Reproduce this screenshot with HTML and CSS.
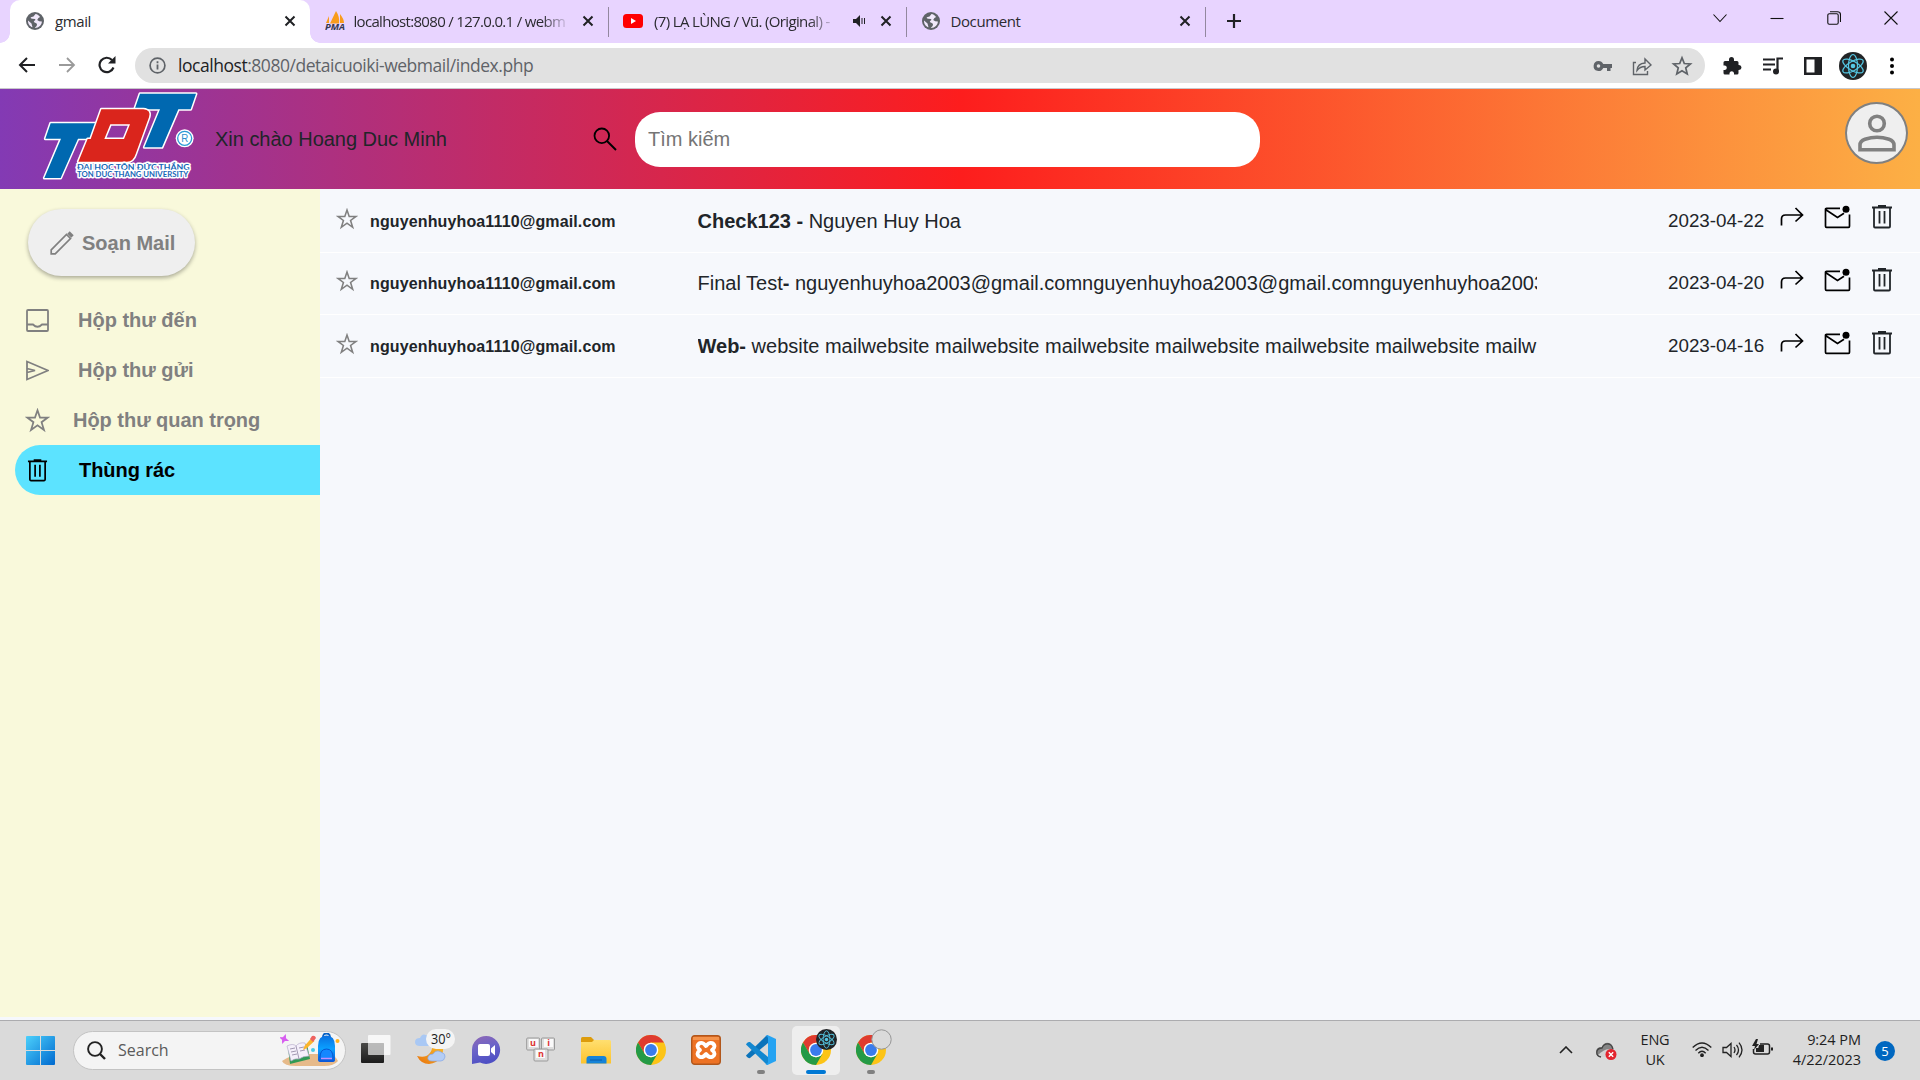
FILE: index.html
```html
<!DOCTYPE html>
<html lang="vi">
<head>
<meta charset="utf-8">
<title>gmail</title>
<link rel="stylesheet" href="styles.css">
</head>
<body>
<svg class="defs" width="0" height="0" aria-hidden="true">
  <defs>
    <linearGradient id="gWin" x1="0" y1="0" x2="1" y2="1"><stop offset="0" stop-color="#4cd0fb"/><stop offset="1" stop-color="#0069cf"/></linearGradient>
    <linearGradient id="gFolder" x1="0" y1="0" x2="0" y2="1"><stop offset="0" stop-color="#ffdf70"/><stop offset="1" stop-color="#fcc32c"/></linearGradient>
    <linearGradient id="gChat" x1="0" y1="0" x2=".3" y2="1"><stop offset="0" stop-color="#9068b4"/><stop offset=".5" stop-color="#6c64c8"/><stop offset="1" stop-color="#4f50c4"/></linearGradient>
    <linearGradient id="gBag" x1="0" y1="0" x2="0" y2="1"><stop offset="0" stop-color="#0a6fe0"/><stop offset=".5" stop-color="#0aa0ff"/><stop offset="1" stop-color="#0a55d8"/></linearGradient>
    <linearGradient id="gDark" x1="0" y1="0" x2="0" y2="1"><stop offset="0" stop-color="#4a4a48"/><stop offset="1" stop-color="#1c1c1c"/></linearGradient>
    <linearGradient id="gMoon" x1="1" y1="0" x2="0" y2="1"><stop offset="0" stop-color="#fbc02d"/><stop offset="1" stop-color="#e8720c"/></linearGradient>
  </defs>
  <symbol id="globe" viewBox="0 0 18 18"><circle cx="9" cy="9" r="9" fill="#5f6368"/><path d="M2 8.500l3.500 3 1 3.800c-2.700-.800-4.700-3.500-4.500-6.800zM9.500 2l-2 2.500-2.600.8c-.6.500.2 1.600 1.500 1.500l2.500.2c1 .4.400 1.600-.6 1.800l-.5 1.300 2.800 1.400c.8.800.3 2.400-1 3.600l-.8 1c3.800.200 7-2.900 7.100-6.500l-2.700-.3-2-1.400 1.200-2 1.700-.8C12.900 3.300 11.400 2.200 9.500 2z" fill="#f1e9fb"/></symbol>
  <symbol id="x" viewBox="0 0 12 12"><path d="M1.500 1.500l9 9M10.500 1.500l-9 9" stroke="#202124" stroke-width="2" fill="none"/></symbol>
  <symbol id="star" viewBox="0 0 24 24"><path d="M12 2.200l2.400 7h7.500l-6 4.400 2.300 7.500-6.200-4.500-6.200 4.500 2.300-7.500-6-4.400h7.500z" fill="none" stroke="currentColor" stroke-width="1.700"/></symbol>
  <symbol id="trash" viewBox="0 0 22 24"><path d="M1 2.500h20M7 1h8" stroke="currentColor" stroke-width="1.800" fill="none"/><path d="M3 3v18.500q0 1 1 1h14q1 0 1-1V3M8.500 6v12.500M13.500 6v12.500" stroke="currentColor" stroke-width="1.800" fill="none"/></symbol>
  <symbol id="forward" viewBox="0 0 24 20"><path d="M1.500 18.500V12q0-4 4-4H22M15.500 1l7 7-7 6.500" stroke="#000" stroke-width="1.700" fill="none"/></symbol>
  <symbol id="unread" viewBox="0 0 27 24"><path d="M16 3.300H2.500q-1 0-1 1v17q0 1 1 1h22q1 0 1-1V9.500M1.500 4.500l12 8 6.500-4.300" stroke="#000" stroke-width="1.700" fill="none"/><circle cx="22" cy="4.200" r="3.500"/></symbol>
  <symbol id="react" viewBox="0 0 28 28"><circle cx="14" cy="14" r="14" fill="#222426"/><g fill="none" stroke="#55c8e4" stroke-width="1.200"><ellipse cx="14" cy="14" rx="11.500" ry="4.500" transform="rotate(90 14 14)"/><ellipse cx="14" cy="14" rx="11.500" ry="4.500" transform="rotate(30 14 14)"/><ellipse cx="14" cy="14" rx="11.500" ry="4.500" transform="rotate(150 14 14)"/></g><circle cx="14" cy="14" r="2.300" fill="#55c8e4"/></symbol>
  <symbol id="chrome" viewBox="0 0 30 30"><circle cx="15" cy="15" r="15" fill="#fcc417"/><path d="M2 7.500A15 15 0 0 1 28 7.500H15L8.500 11.200V18.700z" fill="#df3b2f"/><path d="M2 7.500L8.600 18.700 15 22.500 21.500 18.700 15 30A15 15 0 0 1 2 7.500z" fill="#249a46"/><circle cx="15" cy="15" r="7.300" fill="#fff"/><circle cx="15" cy="15" r="5.900" fill="#3a7cec"/></symbol>
</svg>

<header class="browser">
  <div class="tabstrip">
    <div class="tab tab-active"><svg class="fav" width="18" height="18"><use href="#globe"/></svg><span class="tab-title">gmail</span><svg class="close" width="12" height="12"><use href="#x"/></svg></div>
    <div class="tab"><svg class="fav pma" width="20" height="20" viewBox="0 0 20 20"><path d="M1 12L4 5v7zM5 12.500L11 0q4 6 3 12.500zM15 12V3q4 5 4 9z" fill="#f89c1c"/><text x="0" y="19" font-size="8.500" font-weight="700" textLength="20" lengthAdjust="spacingAndGlyphs" fill="#333850" font-style="italic">PMA</text></svg><span class="tab-title fade long">localhost:8080 / 127.0.0.1 / webm</span><svg class="close" width="12" height="12"><use href="#x"/></svg></div>
    <div class="tab"><svg class="fav" width="20" height="14" viewBox="0 0 20 14"><rect width="20" height="14" rx="3.500" fill="#f00"/><path d="M8 4v6l5-3z" fill="#fff"/></svg><span class="tab-title fade video">(7) LẠ LÙNG / Vũ. (Original) -</span><svg class="audio" width="14" height="12" viewBox="0 0 14 12"><path d="M1 4h3l4-4v12L4 8H1z" fill="#202124"/><path d="M10 3v6M12.500 3v6" stroke="#202124"/></svg><svg class="close" width="12" height="12"><use href="#x"/></svg></div>
    <div class="tab"><svg class="fav" width="18" height="18"><use href="#globe"/></svg><span class="tab-title">Document</span><svg class="close" width="12" height="12"><use href="#x"/></svg></div>
    <svg class="new-tab" width="16" height="16" viewBox="0 0 16 16"><path d="M8 1v14M1 8h14" stroke="#202124" stroke-width="2.200"/></svg>
    <div class="window-buttons">
      <svg width="14" height="14" viewBox="0 0 14 14"><path d="M.5 3.500l6.500 7 6.500-7"/></svg>
      <svg width="14" height="14" viewBox="0 0 14 14"><path d="M.5 7.500h13"/></svg>
      <svg width="14" height="14" viewBox="0 0 14 14"><rect x=".8" y="2.800" width="10.400" height="10.400" rx="1.500"/><path d="M3 .7h7.500q3 0 3 3V11"/></svg>
      <svg width="14" height="14" viewBox="0 0 14 14"><path d="M.5.5l13 13M13.500.5l-13 13"/></svg>
    </div>
  </div>
  <div class="toolbar">
    <div class="nav">
      <svg width="18" height="16" viewBox="0 0 18 16"><path d="M17 8H2M9 1L2 8l7 7" fill="none" stroke="#202124" stroke-width="2"/></svg>
      <svg width="18" height="16" viewBox="0 0 18 16"><path d="M1 8h15M9 1l7 7-7 7" fill="none" stroke="#9a9a9a" stroke-width="1.800"/></svg>
      <svg width="18" height="18" viewBox="0 0 18 18"><path d="M15.500 11.500A7.200 7.200 0 1 1 14 4" fill="none" stroke="#202124" stroke-width="2.200"/><path d="M17.500 0v7.500H10z" fill="#202124"/></svg>
    </div>
    <div class="omnibox">
      <svg width="17" height="17" viewBox="0 0 17 17"><circle cx="8.500" cy="8.500" r="7.400" fill="none" stroke="#5f6368" stroke-width="1.700"/><path d="M8.500 7.500v5M8.500 4.200v2" stroke="#5f6368" stroke-width="1.800"/></svg>
      <span class="url"><b>localhost</b>:8080/detaicuoiki-webmail/index.php</span>
      <div class="omni-icons">
        <svg width="20" height="20" viewBox="0 0 20 20"><path d="M5.500 5A5 5 0 1 0 10.200 12H14v3h3.500v-3H19V8h-8.800A5 5 0 0 0 5.500 5zm0 3.200a1.800 1.800 0 1 1 0 3.600 1.800 1.800 0 0 1 0-3.600z" fill="#5f6368" fill-rule="evenodd"/></svg>
        <svg width="20" height="20" viewBox="0 0 20 20"><path d="M4 6.500H1.500v12h14V15M5 14.500q.5-7 8-7.500V3l6 6-6 5v-3.500q-5 0-8 4z" fill="none" stroke="#5f6368" stroke-width="1.400"/></svg>
        <svg width="22" height="22" viewBox="0 0 24 24"><path d="M12 3l2.500 6.300 6.700.5-5.100 4.300 1.600 6.600-5.700-3.600-5.700 3.600 1.600-6.600-5.100-4.300 6.700-.5z" fill="none" stroke="#5f6368" stroke-width="1.900"/></svg>
      </div>
    </div>
    <div class="ext">
      <svg width="20" height="20" viewBox="0 0 20 20"><path d="M7 5V3.500a2.500 2.500 0 0 1 5 0V5h3q1.500 0 1.500 1.500V9H17a2.500 2.500 0 0 1 0 5h-.5v3q0 1.500-1.500 1.500h-3V17a2.300 2.300 0 0 0-4.500 0v1.500H3q-1.500 0-1.500-1.500v-3H3a2.300 2.300 0 0 0 0-4.500H1.500v-3Q1.500 5 3 5z" fill="#202124"/></svg>
      <svg width="20" height="20" viewBox="0 0 20 20"><path d="M0 3.500h12M0 8.500h12M0 13.500h8M14.500 15V2.500H20" stroke="#202124" stroke-width="2.200" fill="none"/><circle cx="13" cy="15.500" r="3" fill="#202124"/></svg>
      <svg width="18" height="18" viewBox="0 0 18 18"><path d="M0 0h18v18H0zM2.500 2.500v13h8v-13z" fill="#202124" fill-rule="evenodd"/></svg>
      <svg width="28" height="28"><use href="#react"/></svg>
      <svg width="6" height="18" viewBox="0 0 6 18"><circle cx="3" cy="2.500" r="2"/><circle cx="3" cy="9" r="2"/><circle cx="3" cy="15.500" r="2"/></svg>
    </div>
  </div>
</header>

<div class="banner">
  <svg class="logo" width="164" height="95" viewBox="0 3 492 285">
    <g stroke="#fff" stroke-width="9" stroke-linejoin="round" paint-order="stroke">
      <path d="M38 106H200L184 152H120L68 270H19L69 152H22z" fill="#0068b0"/>
      <path d="M306 17H474L458 64H421L372 178H319L366 64H290z" fill="#0068b0"/>
      <path d="M190 64H316Q340 66 333 88L293 198Q286 221 267 221H121L149 153H158zM217 109L199 153H258L276 109z" fill="#da251c" fill-rule="evenodd"/>
    </g>
    <circle cx="440" cy="151" r="27" fill="#fff"/><circle cx="440" cy="151" r="21" fill="#fff" stroke="#2c9ad6" stroke-width="4"/>
    <text x="430" y="162" font-size="30" textLength="21" lengthAdjust="spacingAndGlyphs" fill="#2c8fce">R</text>
    <g font-weight="700" fill="#1668b8" stroke="#fff" stroke-width="9" stroke-linejoin="round" paint-order="stroke" font-family="Lato, sans-serif"><text x="117" y="245" font-size="23" textLength="338" lengthAdjust="spacingAndGlyphs">ĐẠI HỌC TÔN ĐỨC THẮNG</text><text x="117" y="268" font-size="23" textLength="334" lengthAdjust="spacingAndGlyphs">TON DUC THANG UNIVERSITY</text></g>
  </svg>
  <span class="greeting">Xin chào Hoang Duc Minh</span>
  <svg class="search-icon" width="24" height="24" viewBox="0 0 24 24"><circle cx="8.800" cy="8.800" r="7.300" fill="none" stroke="#000" stroke-width="1.800"/><path d="M14 14l9 9" stroke="#000" stroke-width="2"/></svg>
  <input class="search" type="text" placeholder="Tìm kiếm">
  <div class="profile"><svg width="38" height="38" viewBox="0 0 38 38" fill="none" stroke="#808080" stroke-width="3.600"><circle cx="19" cy="9.500" r="7.300"/><path d="M2 35.700V31q0-4 5-5.800 12-4 24 0Q36 27 36 31v4.700z"/></svg></div>
</div>

<main class="mail">
  <nav class="sidebar">
    <div class="compose"><svg width="24" height="24" viewBox="0 0 24 24" fill="none" stroke="#808080" stroke-width="1.700"><path d="M1.200 22.800v-4L16.500 3.500l4 4L5.200 22.800z"/><path d="M18.500 1.500l4 4" stroke-width="3.400"/></svg><span>Soạn Mail</span></div>
    <ul class="folders">
      <li><svg width="23" height="23" viewBox="0 0 23 23"><path d="M1 2q0-1 1-1h19q1 0 1 1v19q0 1-1 1H2q-1 0-1-1zM1 15.500h6q4.500 4.500 9 0h6" fill="none" stroke="currentColor" stroke-width="1.800"/></svg><span>Hộp thư đến</span></li>
      <li><svg width="23" height="23" viewBox="0 0 23 23"><path d="M1 2.500v18l21-9zM1 9.500l8 2-8 2" fill="none" stroke="currentColor" stroke-width="1.800"/></svg><span>Hộp thư gửi</span></li>
      <li class="wide"><svg width="25" height="25"><use href="#star"/></svg><span>Hộp thư quan trọng</span></li>
      <li class="current"><svg width="21" height="23"><use href="#trash"/></svg><span>Thùng rác</span></li>
    </ul>
  </nav>
  <section class="list">
    <article class="row"><svg class="mark" width="22" height="22"><use href="#star"/></svg><b class="from">nguyenhuyhoa1110@gmail.com</b><p class="subject"><b>Check123 - </b>Nguyen Huy Hoa</p><time>2023-04-22</time><div class="actions"><svg width="24" height="20"><use href="#forward"/></svg><svg width="27" height="24"><use href="#unread"/></svg><svg width="22" height="24"><use href="#trash"/></svg></div></article>
    <article class="row"><svg class="mark" width="22" height="22"><use href="#star"/></svg><b class="from">nguyenhuyhoa1110@gmail.com</b><p class="subject">Final Test<b>-</b> nguyenhuyhoa2003@gmail.comnguyenhuyhoa2003@gmail.comnguyenhuyhoa2003</p><time>2023-04-20</time><div class="actions"><svg width="24" height="20"><use href="#forward"/></svg><svg width="27" height="24"><use href="#unread"/></svg><svg width="22" height="24"><use href="#trash"/></svg></div></article>
    <article class="row"><svg class="mark" width="22" height="22"><use href="#star"/></svg><b class="from">nguyenhuyhoa1110@gmail.com</b><p class="subject"><b>Web-</b> website mailwebsite mailwebsite mailwebsite mailwebsite mailwebsite mailwebsite mailw</p><time>2023-04-16</time><div class="actions"><svg width="24" height="20"><use href="#forward"/></svg><svg width="27" height="24"><use href="#unread"/></svg><svg width="22" height="24"><use href="#trash"/></svg></div></article>
  </section>
</main>

<footer class="taskbar">
  <svg class="start" width="29" height="29" viewBox="0 0 29 29"><path d="M1 0h13v14H0V1q0-1 1-1zM15 0h13q1 0 1 1v13H15zM0 15h14v14H1q-1 0-1-1zM15 15h14v13q0 1-1 1H15z" fill="url(#gWin)"/></svg>
  <div class="task-search">
    <svg width="19" height="19" viewBox="0 0 19 19"><circle cx="8" cy="8" r="6.900" fill="none" stroke="#222" stroke-width="1.900"/><path d="M13 13l5 5" stroke="#222" stroke-width="2.400"/></svg>
    <span>Search</span>
    <svg class="school" width="62" height="34" viewBox="0 0 62 34"><path d="M2 28q10-7 22-7h22q10 1 12 7-4 5-14 5H16Q4 33 2 28z" fill="#e6ba8a"/><path d="M8 15l19-4 3 15-20 5z" fill="#2f9a55"/><path d="M7 13q6-3 9 0 3-4 9-3l4 13q-6 0-10 3-4-1-8 2z" fill="#f4effa" stroke="#b8aecb" stroke-width=".7"/><path d="M16 13l3 13M10 16l5-1M11 19l5-1M12 22l5-1M19 15l5-1M20 18l5-1" stroke="#8d83a0" stroke-width=".8"/><path d="M23 17l1.500-4 7-8 3 3-7.500 7z" fill="#fbb52d"/><path d="M30 6l2-3q3-1 4 2l-3 4z" fill="#ee6260"/><path d="M4 2l1.200 3L8 6 5.200 7 4 10 2.800 7 0 6l2.800-1z" fill="#d75df0" stroke="#d75df0" transform="rotate(20 4 6)"/><circle cx="33" cy="17" r="2" fill="#49cbe7"/><circle cx="57.500" cy="8" r="2" fill="#ffb21a"/><path d="M43 4q0-3.500 3.500-3.500T50 4" stroke="#0861c4" stroke-width="1.800" fill="none"/><path d="M38 13q0-10.500 8.500-10.500T55 13v14q0 2-3 2H41q-3 0-3-2z" fill="url(#gBag)"/><path d="M40 25q0-9 6.500-9t6.500 9" fill="#1587ff" stroke="#0756d0"/><path d="M41 25.500h11" stroke="#c48fff" stroke-width="1.500"/></svg>
  </div>
  <div class="apps">
    <div class="app"><svg width="30" height="30" viewBox="0 0 30 30"><rect y="8" width="23" height="20" rx="1" fill="url(#gDark)"/><rect x="7" y="0" width="22.500" height="20" rx="1" fill="#fff" opacity=".78"/><path d="M7 8h16v12H7z" fill="#888" opacity=".35"/></svg></div>
    <div class="app"><svg class="weather" width="42" height="36" viewBox="0 0 42 36"><path d="M28 15q2 18-14 20-8 0-12-8 14 4 16-12z" fill="url(#gMoon)"/><path d="M5 17q-5 0-5-4t5-4q2-5 6-3 5 0 6 5 4 6-1 6z" fill="#a9c8f4"/><path d="M17 32q-5 0-4-4 1-3 5-3 3-5 8-2 5 2 4 5-1 4-4 4z" fill="#b4cdf5" stroke="#86a7e5" stroke-width=".7"/><rect x="11" y="0" width="29" height="20" rx="10" fill="#f4f4f4"/><text x="16" y="15" font-size="14" textLength="20" lengthAdjust="spacingAndGlyphs" fill="#1c1c1c">30°</text></svg></div>
    <div class="app"><svg width="30" height="30" viewBox="0 0 30 30"><path d="M15 1a14 14 0 1 1-6 26.600L1 29V15A14 14 0 0 1 15 1z" fill="url(#gChat)"/><rect x="7" y="9" width="12" height="12" rx="2" fill="#fff"/><path d="M20 13.500l4-3.500v10.500L20 17z" fill="#fff"/></svg></div>
    <div class="app"><svg width="30" height="26" viewBox="0 0 30 26"><g stroke="#999"><rect x=".7" y="1" width="13" height="12" rx="1" fill="#dedede"/><rect x="15.500" y="1" width="13" height="12" rx="1" fill="#dedede"/><rect x="8" y="12" width="14" height="12" rx="1" fill="#dedede"/></g><path d="M3 2h9v8H3zM18 2h9v8h-9zM10 13h9v8h-9z" fill="#fafafa"/><g font-size="9" font-weight="700" fill="#d33" text-anchor="middle"><text x="7" y="9">u</text><text x="22.500" y="9">i</text><text x="15" y="20">n</text></g></svg></div>
    <div class="app"><svg width="30" height="27" viewBox="0 0 30 27"><path d="M0 1.500Q0 0 1.500 0H10l3 3v5H0z" fill="#dd9c0c"/><path d="M0 5h11l2-2h15.500Q30 3 30 4.500V26.500H0z" fill="url(#gFolder)"/><path d="M5.500 22q0-3 3-3h14q3 0 3 3v4.500h-20z" fill="#1583d8"/><path d="M9 23h12" stroke="#0a5aa8"/></svg></div>
    <div class="app"><svg width="30" height="30"><use href="#chrome"/></svg></div>
    <div class="app"><svg width="30" height="30" viewBox="0 0 30 30"><rect x=".7" y=".7" width="28.600" height="28.600" rx="3" fill="#ed7224" stroke="#b1571c" stroke-width="1.400"/><path d="M2 2h26v3H2z" fill="#f8a15c" opacity=".7"/><path d="M9 8q3-1 6 3 3-4 6-3 5 3 0 7 5 4 0 7-3 1-6-3-3 4-6 3-5-3 0-7-5-4 0-7z" fill="#ed7224" stroke="#fff" stroke-width="3.800" stroke-linejoin="round"/></svg></div>
    <div class="app running"><svg width="30" height="30" viewBox="0 0 30 30"><path d="M22 0v8L4 23q-1.500.5-3-1l-1-1.500L20 1z" fill="#0b73ba"/><path d="M22 30v-8L4 7Q2.500 6.500 1 8L0 9.500 20 29z" fill="#1287d0"/><path d="M21.500 0L30 4v22l-8.500 4q-1 0-2-1 2.500 0 2.500-2V3q0-2-2.500-2z" fill="#25a3f2"/></svg></div>
    <div class="app selected"><svg width="30" height="30"><use href="#chrome"/></svg><svg class="badge" width="21" height="21"><use href="#react"/></svg></div>
    <div class="app running"><svg width="30" height="30"><use href="#chrome"/></svg><svg class="badge" width="21" height="21" viewBox="0 0 21 21"><circle cx="10.500" cy="10.500" r="9.700" fill="#dadada" stroke="#969696"/></svg></div>
  </div>
  <div class="tray">
    <svg width="14" height="8" viewBox="0 0 14 8"><path d="M1 7l6-6 6 6" fill="none" stroke="#222" stroke-width="1.600"/></svg>
    <svg class="cloud" width="21" height="18" viewBox="0 0 21 18"><path d="M5 15q-5 0-5-5t6-5q2-5 7-4 4 1 4 6l3 4-7 4z" fill="#858585"/><path d="M2 13Q10 5 16 8l-3 7H5q-3 0-3-2z" fill="#d2d2d2"/><path d="M5 15q-5-1-4-6 1-3 5-3 2-5 7-4 3 1 4 5" fill="none" stroke="#444" stroke-width="1.300"/><circle cx="15" cy="12.500" r="5.500" fill="#e3242e"/><path d="M12.800 10.300l4.400 4.400M17.200 10.300l-4.400 4.400" stroke="#fff" stroke-width="1.400"/></svg>
    <div class="lang">ENG<br>UK</div>
    <svg class="wifi" width="20" height="15" viewBox="0 0 20 15" fill="none" stroke="#222" stroke-width="1.400"><path d="M.7 5.500q9.300-9 18.600 0M3.500 8.500q6.500-6.500 13 0M6.300 11.200q3.700-3.700 7.400 0"/><circle cx="10" cy="13.200" r="1.200" fill="#222"/></svg>
    <svg class="volume" width="21" height="16" viewBox="0 0 21 16" fill="none" stroke="#222" stroke-width="1.300"><path d="M1 5.500h3.500L9 1.500v13l-4.500-4H1zM12 5q2 3 0 6M14.500 2.800q4 5.200 0 10.400M17 .7q6 7.300 0 14.600"/></svg>
    <svg class="battery" width="21" height="17" viewBox="0 0 21 17"><path d="M8 5h7.500q2 0 2 2v6q0 2-2 2H3.500q-2 0-2-2v-3" fill="none" stroke="#222" stroke-width="1.500"/><path d="M4 9h8v4H4zM19 8.500h2v3h-2zM4 0L0 7h3l-1 4 5-6H4.500L6 0zM7 6h5v4H6z" fill="#222"/></svg>
    <div class="clock">9:24 PM<br>4/22/2023</div>
    <div class="count">5</div>
  </div>
</footer>
</body>
</html>
```
FILE: styles.css
```css
* { box-sizing: border-box; }
body {
  margin: 0;
  width: 1920px;
  height: 1080px;
  overflow: hidden;
  display: flex;
  flex-direction: column;
  background: #f6f8fc;
  color: #212529;
  font-family: "Liberation Sans", Arial, sans-serif;
  font-size: 20px;
}
svg { display: block; flex: none; }
.defs { position: absolute; }

/* Browser frame */
.browser { font-family: "Open Sans", "Noto Sans", sans-serif; height: 89px; flex: none; border-bottom: 1px solid #c8c8cb; background: #fff; }
.tabstrip { display: flex; align-items: center; height: 43px; padding-left: 10px; background: #e8d4ff; }
.tab { display: flex; align-items: center; width: 298.5px; height: 30px; padding: 0 14px 2px 14.5px; border-right: 1px solid #93889f; }
.tab-active {
  width: 300px; height: 43px; padding: 0 14px 2px 16px; border-right: 0; border-radius: 10px 10px 0 0; background: #fff; position: relative;
}
.tab-active::before, .tab-active::after {
  content: ""; position: absolute; bottom: 0; width: 10px; height: 10px;
}
.tab-active::before { left: -10px; background: radial-gradient(circle at 0 0, transparent 9.5px, #fff 10px); }
.tab-active::after { right: -10px; background: radial-gradient(circle at 100% 0, transparent 9.5px, #fff 10px); }
.tab .fav { margin-right: 11px; }
.tab .pma { margin-right: 9px; }
.tab-title { flex: 1; min-width: 0; overflow: hidden; white-space: nowrap; font-size: 15px; letter-spacing: -0.4px; color: #2b2b30; line-height: 24px; }
.tab-title.long { letter-spacing: -0.68px; }
.tab-title.video { letter-spacing: -0.65px; }
.fade { mask-image: linear-gradient(to right, #000 calc(100% - 28px), transparent); }
.tab .close { margin-left: 12px; }
.tab .audio { margin-left: 15px; margin-right: 0; }
.tab .audio + .close { margin-left: 14px; }
.new-tab { margin: -1px 0 0 20px; }
.window-buttons { display: flex; align-items: center; gap: 43px; margin: -7px 22px 0 auto; }
.window-buttons svg { fill: none; stroke: #111; stroke-width: 1.1; }
.toolbar { display: flex; align-items: center; height: 45px; }
.nav { display: flex; align-items: center; gap: 22px; margin: -1px 0 0 18px; width: 117px; }
.omnibox { display: flex; align-items: center; width: 1570px; height: 35px; border-radius: 18px; background: #e1e1e1; padding: 0 12px 0 14px; }
.url { margin: -2px 0 0 12px; font-size: 17.5px; letter-spacing: -0.46px; color: #5f6368; }
.url b { font-weight: 400; color: #202124; }
.omni-icons { display: flex; align-items: center; gap: 19px; margin-left: auto; }
.ext { display: flex; align-items: center; margin-left: 17px; gap: 21px; }
.ext svg:nth-child(4) { margin-left: -4px; }
.ext svg:nth-child(5) { margin-left: 1px; }

/* Webmail banner */
.banner { display: flex; height: 100px; flex: none; padding-left: 38px; background: linear-gradient(90deg, #833ab4 0%, #fd1d1d 50%, #fcb045 100%); }
.greeting { width: 378px; margin-left: 13px; line-height: 100px; letter-spacing: -0.02px; }
.search-icon { margin-top: 38px; }
.search { width: 625px; height: 55px; margin: 23px 0 0 18px; padding: 0 13px; border: 0; border-radius: 25px; outline: 0; background: #fff; font: 20px "Liberation Sans", Arial, sans-serif; }
.search::placeholder { color: #757575; }
.profile { display: flex; align-items: center; justify-content: center; width: 63px; height: 62px; margin: 13px 12px 0 auto; border: 2px solid #808080; border-radius: 50%; background: #efefef; }

/* Mail area */
.mail { display: flex; height: 831px; flex: none; }
.sidebar { width: 320px; height: 828px; padding: 20px 0 0 15px; background: #f9f9db; color: #808080; font-weight: 700; }
.compose { display: flex; align-items: center; gap: 8px; width: 167px; height: 67px; margin-left: 13px; padding-left: 22px; border-radius: 34px; background: #efefef; box-shadow: 0 2px 4px rgba(0, 0, 0, .32); white-space: nowrap; }
.compose span { padding-top: 1px; }
.folders { list-style: none; margin: 19px 0 0; padding: 0; }
.folders li { display: flex; align-items: center; height: 50px; padding-left: 11px; gap: 29px; white-space: nowrap; }
.folders .wide { padding-left: 10px; gap: 23px; letter-spacing: -0.03px; }
.folders .current { padding-left: 12px; gap: 31px; letter-spacing: -0.06px; border-radius: 25px 0 0 25px; background: #5ce3ff; color: #000; }
.list { flex: 1; padding-top: 1px; }
.row { display: flex; align-items: center; height: 62.67px; border-bottom: 1px solid #fff; padding-left: 16px; }
.mark { color: #808080; margin: -4px 12px 0 0; }
.from { width: 327.5px; font-size: 16px; letter-spacing: 0.13px; margin-top: 2px; }
.subject { width: 839.5px; margin: 0; overflow: hidden; white-space: nowrap; line-height: 30px; }
.row time { width: 112px; margin-left: 131px; font-size: 18.8px; }
.actions { display: flex; align-items: center; margin-top: -7px; }
.actions svg:nth-child(2) { margin-left: 20px; }
.actions svg:nth-child(3) { margin-left: 20px; }

/* Windows taskbar */
.taskbar { display: flex; align-items: center; height: 60px; flex: none; padding-left: 26px; border-top: 1px solid #acacaf; background: #dadada; font-family: "Open Sans", "Noto Sans", sans-serif; color: #1f1f1f; }
.start { margin-top: -1px; }
.task-search { display: flex; align-items: center; width: 273px; height: 39px; margin: -1px 0 0 18px; padding: 0 3px 0 13px; border: 1px solid #c3c3c3; border-radius: 20px; background: #f4f4f4; font-size: 16px; color: #5a5a5a; }
.task-search span { margin-left: 12px; }
.school { margin-left: auto; }
.apps { display: flex; margin-left: 2px; }
.app { display: flex; align-items: center; justify-content: center; width: 55px; height: 59px; padding-bottom: 1px; position: relative; }
.weather { margin: -6px 0 0 11px; }
.selected::before { content: ""; position: absolute; z-index: -1; inset: 5px 3px 5px 4px; border-radius: 5px; background: #eee; }
.selected { isolation: isolate; }
.running::after, .selected::after { content: ""; position: absolute; bottom: 6px; width: 8px; height: 4px; border-radius: 2px; background: #808080; }
.selected::after { width: 20px; background: #0078d4; }
.badge { position: absolute; top: 8px; left: 28px; }
.tray { display: flex; align-items: center; margin: -2px 0 0 auto; padding-right: 25px; font-size: 14.5px; line-height: 20px; }
.cloud { margin-left: 23px; margin-top: 2px; }
.lang { width: 40px; margin-left: 18px; text-align: center; letter-spacing: -0.2px; }
.wifi { margin-left: 17px; }
.volume { margin-left: 10px; }
.battery { margin-left: 9px; margin-top: -4px; }
.clock { width: 88px; text-align: right; letter-spacing: -0.05px; }
.count { width: 20px; height: 20px; margin: 2px 0 0 14px; border-radius: 50%; background: #0067c0; color: #fff; font-size: 13px; text-align: center; }
```
